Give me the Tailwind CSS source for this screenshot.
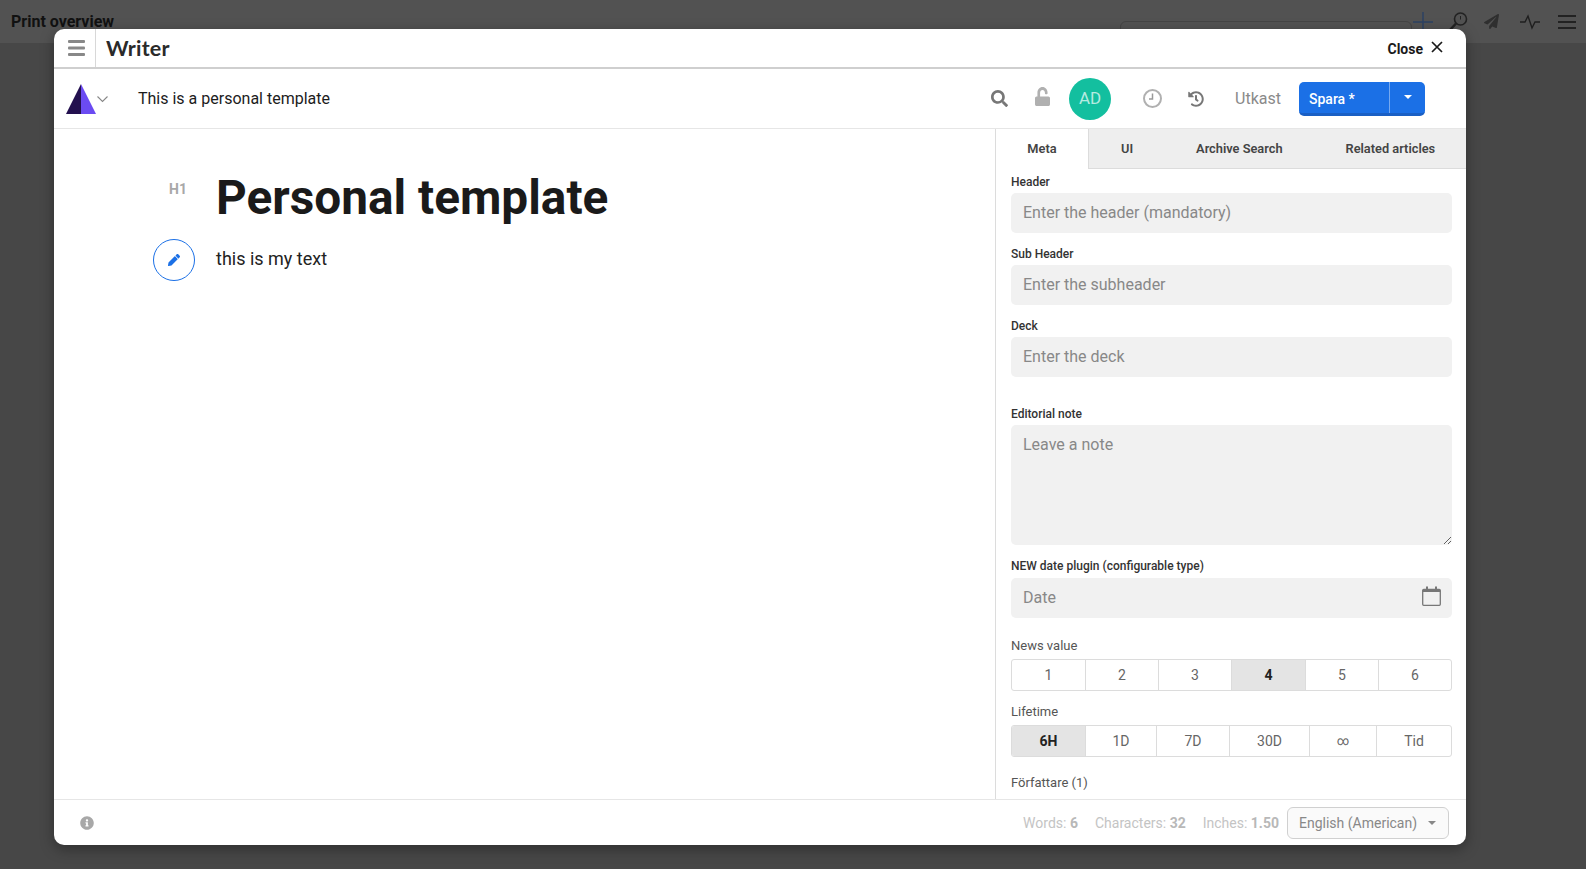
<!DOCTYPE html>
<html>
<head>
    <title>Writer</title>
    <meta charset="utf-8">
    <script src="https://cdn.jsdelivr.net/npm/@tailwindcss/browser@4"></script>
</head>
<body class="bg-[#474747] font-[Roboto,sans-serif] overflow-hidden">
    <div class="relative h-[869px] w-[1586px]">
        <!-- Page behind the modal -->
        <div class="flex h-[43px] items-center justify-between bg-[#525252] pl-[11px] pr-[10px]">
            <h1 class="text-[16px] font-bold text-[#111] -mb-[1px]">Print overview</h1>
            <div class="flex items-center">
                <div class="h-[30px] w-[292px] rounded-t-md border border-[#444] mt-[28px]"></div>
                <svg class="ml-[1px] h-[20px] w-[20px] text-[#2c4163]" viewBox="0 0 20 20" fill="none" stroke="currentColor" stroke-width="1.5"><path d="M10 0v20M0 10h20"/></svg>
                <svg class="ml-[15px] h-[20px] w-[20px] text-[#222]" viewBox="0 0 20 20" fill="none" stroke="currentColor" stroke-width="1.6"><circle cx="12.5" cy="7" r="6"/><path d="M8 11.5 1.5 18.5" stroke-width="2.5"/><path d="M12.5 4v3.5" stroke-width="1"/></svg>
                <svg class="ml-[16px] h-[15px] w-[15px] text-[#2f2f2f]" viewBox="0 0 512 512" fill="currentColor"><path d="M476 3.2L12.5 270.6c-18.1 10.4-15.8 35.6 2.2 43.2L121 358.4l287.3-253.2c5.5-4.9 13.3 2.6 8.6 8.3L176 407v80.5c0 23.6 28.5 32.9 42.5 15.8L282 426l124.6 52.2c14.2 6 30.4-2.9 33-18.2l72-432C515 7.8 493.3-6.8 476 3.2z"/></svg>
                <svg class="ml-[21px] h-[20px] w-[20px] text-[#1f1f1f]" viewBox="0 0 20 20" fill="none" stroke="currentColor" stroke-width="1.4"><path d="M0 10h5l3-6 4 12 3-6h5"/></svg>
                <svg class="ml-[18px] h-[18px] w-[18px] text-[#222]" viewBox="0 0 18 18" fill="none" stroke="currentColor" stroke-width="1.8"><path d="M0 3h18M0 9h18M0 15h18"/></svg>
            </div>
        </div>

        <!-- Modal -->
        <div class="absolute left-[54px] top-[29px] flex h-[816px] w-[1412px] flex-col overflow-hidden rounded-[10px] bg-white shadow-[0_4px_14px_rgba(0,0,0,0.35)]">
            <!-- Title bar -->
            <div class="flex h-[40px] shrink-0 items-center border-b-2 border-[#cfcfcf]">
                <div class="flex h-full w-[42px] items-center justify-end border-r border-[#d8d8d8] pr-[10px]">
                    <svg class="h-[16px] w-[17px] text-[#888]" viewBox="0 0 17 16" fill="currentColor"><rect width="17" height="3" rx="1"/><rect y="6.5" width="17" height="3" rx="1"/><rect y="13" width="17" height="3" rx="1"/></svg>
                </div>
                <div class="ml-[10px] mt-[2px] font-[Lato,sans-serif] text-[21.5px] font-bold leading-none tracking-[0.2px] text-[#2a2a2a]">Writer</div>
                <div class="ml-auto flex items-center pr-[23px]">
                    <span class="mt-[3px] text-[14px] font-bold text-[#1a1a1a]">Close</span>
                    <svg class="ml-[8px] -mt-[2px] h-[12px] w-[12px] text-[#1a1a1a]" viewBox="0 0 12 12" fill="none" stroke="currentColor" stroke-width="1.7"><path d="M1 1l10 10M11 1 1 11"/></svg>
                </div>
            </div>

            <!-- Toolbar -->
            <div class="flex h-[60px] shrink-0 items-center border-b border-[#e6e6e6] pl-[12px]">
                <svg class="h-[30px] w-[30px]" viewBox="0 0 30 30"><path d="M15 0 0 30h15z" fill="#23104f"/><path d="M15 0l15 30H15z" fill="#6b4bf2"/></svg>
                <svg class="ml-[1px] h-[8px] w-[11px] text-[#888]" viewBox="0 0 11 8" fill="none" stroke="currentColor" stroke-width="1.1"><path d="M.5 1.5l5 5 5-5"/></svg>
                <div class="ml-[30px] text-[16px] text-[#1c1c1c]">This is a personal template</div>

                <div class="ml-auto flex items-center pr-[41px]">
                    <svg class="h-[17px] w-[17px] text-[#777]" viewBox="0 0 512 512" fill="currentColor"><path d="M505 442.7L405.3 343c-4.5-4.5-10.6-7-17-7H372c27.6-35.3 44-79.7 44-128C416 93.1 322.9 0 208 0S0 93.1 0 208s93.1 208 208 208c48.3 0 92.7-16.4 128-44v16.3c0 6.4 2.5 12.5 7 17l99.7 99.7c9.4 9.4 24.6 9.4 33.9 0l28.3-28.3c9.4-9.4 9.4-24.6.1-34zM208 336c-70.7 0-128-57.2-128-128 0-70.7 57.2-128 128-128 70.7 0 128 57.2 128 128 0 70.7-57.2 128-128 128z"/></svg>
                    <svg class="ml-[27px] -mt-[4px] h-[19px] w-[15px] text-[#b0b0b0]" viewBox="0 0 448 512" preserveAspectRatio="none" fill="currentColor"><path d="M400 256H152V152.9c0-39.6 31.7-72.5 71.3-72.9 40-.4 72.7 32.1 72.7 72v16c0 13.3 10.7 24 24 24h32c13.3 0 24-10.7 24-24v-16C376 68 307.5-.3 223.5 0 139.5.3 72 69.5 72 153.5V256H48c-26.5 0-48 21.5-48 48v160c0 26.5 21.5 48 48 48h352c26.5 0 48-21.5 48-48V304c0-26.5-21.5-48-48-48z"/></svg>
                    <div class="ml-[19px] flex h-[42px] w-[42px] items-center justify-center rounded-full bg-[#13bf9f] text-[17px] text-white/70">AD</div>
                    <svg class="ml-[32px] h-[19px] w-[19px] text-[#b0b0b0]" viewBox="0 0 19 19" fill="none" stroke="currentColor"><circle cx="9.5" cy="9.5" r="8.5" stroke-width="2"/><path d="M9.5 4.5v5.5H6" stroke-width="1.5" stroke="#999"/></svg>
                    <svg class="ml-[26px] h-[16px] w-[16px] text-[#777]" viewBox="0 0 512 512" fill="currentColor"><path d="M504 255.531c.253 136.64-111.18 248.372-247.82 248.468-59.015.042-113.223-20.53-155.822-54.911-11.077-8.94-11.905-25.541-1.839-35.607l11.267-11.267c8.609-8.609 22.353-9.551 31.891-1.984C173.062 425.135 212.781 440 256 440c101.705 0 184-82.311 184-184 0-101.705-82.311-184-184-184-48.814 0-93.149 18.969-126.068 49.932l50.754 50.754c10.08 10.08 2.941 27.314-11.313 27.314H24c-8.837 0-16-7.163-16-16V38.627c0-14.254 17.234-21.393 27.314-11.314l49.372 49.372C129.209 34.136 189.552 8 256 8c136.81 0 247.747 110.78 248 247.531zm-180.912 78.784l9.823-12.63c8.138-10.463 6.253-25.542-4.21-33.679L288 256.349V152c0-13.255-10.745-24-24-24h-16c-13.255 0-24 10.745-24 24v135.651l65.409 50.874c10.463 8.137 25.541 6.253 33.679-4.21z"/></svg>
                    <span class="ml-[31px] text-[16px] text-[#8a8a8a]">Utkast</span>
                    <div class="ml-[18px] flex h-[34px] w-[126px] overflow-hidden rounded-[5px] border-b-[3px] border-[#1a5fc4] bg-[#1b70e6] text-white">
                        <span class="flex w-[90px] items-center pl-[10px] pt-[4px] text-[14px] font-medium">Spara *</span>
                        <span class="flex flex-1 items-center justify-center border-l border-white/40">
                            <span class="h-0 w-0 border-x-[4px] border-t-[4px] border-x-transparent border-t-white"></span>
                        </span>
                    </div>
                </div>
            </div>

            <!-- Body -->
            <div class="flex min-h-0 flex-1">
                <!-- Editor -->
                <div class="flex-1 pl-[99px]">
                    <div class="flex">
                        <div class="w-[63px] pt-[53px] pl-[16px] text-[14px] font-bold leading-[15px] text-[#a8a8a8]">H1</div>
                        <h2 class="pt-[36px] text-[47.75px] font-bold leading-[66px] text-[#1a1a1a]">Personal template</h2>
                    </div>
                    <div class="mt-[8px] flex items-center">
                        <div class="flex h-[42px] w-[42px] items-center justify-center rounded-full border border-[#1b70e6]">
                            <svg class="-mt-[1px] h-[12px] w-[12px] text-[#1b70e6]" viewBox="0 0 512 512" fill="currentColor"><path d="M497.9 142.1l-46.1 46.1c-4.7 4.7-12.3 4.7-17 0l-111-111c-4.7-4.7-4.7-12.3 0-17l46.1-46.1c18.7-18.7 49.1-18.7 67.9 0l60.1 60.1c18.8 18.7 18.8 49.1 0 67.9zM284.2 99.8L21.6 362.4.4 483.9c-2.9 16.4 11.4 30.6 27.8 27.8l121.5-21.3 262.6-262.6c4.7-4.7 4.7-12.3 0-17l-111-111c-4.8-4.7-12.4-4.7-17.1 0z"/></svg>
                        </div>
                        <p class="ml-[21px] -mt-[4px] text-[18px] text-[#222]">this is my text</p>
                    </div>
                </div>

                <!-- Side panel -->
                <div class="w-[471px] shrink-0 overflow-hidden border-l border-[#dcdcdc]">
                    <div class="flex h-[40px] items-center border-b border-[#dcdcdc] bg-[#eeeeee] text-[12.8px] font-semibold text-[#444]">
                        <span class="-mb-px flex h-[40px] w-[93px] items-center justify-center border-r border-[#dcdcdc] bg-white">Meta</span>
                        <span class="ml-[32px]">UI</span>
                        <span class="ml-[63px]">Archive Search</span>
                        <span class="ml-[63px]">Related articles</span>
                    </div>
                    <div class="pl-[15px] pr-[14px]">
                        <label class="mt-[5px] block text-[12px] font-medium leading-[16px] text-[#333]">Header</label>
                        <input class="mt-[3px] block h-[40px] w-full rounded-[5px] bg-[#f1f1f1] px-[12px] pb-[2px] text-[16px] placeholder:text-[#888]" placeholder="Enter the header (mandatory)">
                        <label class="mt-[13px] block text-[12px] font-medium leading-[16px] text-[#333]">Sub Header</label>
                        <input class="mt-[3px] block h-[40px] w-full rounded-[5px] bg-[#f1f1f1] px-[12px] pb-[2px] text-[16px] placeholder:text-[#888]" placeholder="Enter the subheader">
                        <label class="mt-[13px] block text-[12px] font-medium leading-[16px] text-[#333]">Deck</label>
                        <input class="mt-[3px] block h-[40px] w-full rounded-[5px] bg-[#f1f1f1] px-[12px] pb-[2px] text-[16px] placeholder:text-[#888]" placeholder="Enter the deck">
                        <label class="mt-[29px] block text-[12px] font-medium leading-[16px] text-[#333]">Editorial note</label>
                        <textarea class="mt-[3px] block h-[120px] w-full rounded-[5px] bg-[#f1f1f1] px-[12px] py-[8px] text-[16px] placeholder:text-[#888]" placeholder="Leave a note"></textarea>
                        <label class="mt-[13px] block text-[12px] font-medium leading-[16px] text-[#333]">NEW date plugin (configurable type)</label>
                        <div class="relative mt-[4px]">
                            <input class="block h-[40px] w-full rounded-[5px] bg-[#f1f1f1] px-[12px] pb-[2px] text-[16px] placeholder:text-[#888]" placeholder="Date">
                            <svg class="absolute right-[11px] top-[8px] h-[20px] w-[19px] text-[#777]" viewBox="0 0 19 20" fill="none" stroke="currentColor" stroke-width="1.3"><rect x=".7" y="3.5" width="17.6" height="15.8" rx="1"/><path d="M.7 5h17.6" stroke-width="2"/><path d="M5 .5v4M14 .5v4" stroke-width="2"/></svg>
                        </div>
                        <div class="mt-[20px] text-[13px] leading-[16px] text-[#555]">News value</div>
                        <div class="mt-[5px] flex h-[32px] overflow-hidden rounded-[3px] border border-[#dcdcdc] text-[14px] text-[#666]">
                            <span class="flex w-[74px] items-center justify-center border-r border-[#dcdcdc]">1</span>
                            <span class="flex w-[73px] items-center justify-center border-r border-[#dcdcdc]">2</span>
                            <span class="flex w-[73px] items-center justify-center border-r border-[#dcdcdc]">3</span>
                            <span class="flex w-[74px] items-center justify-center border-r border-[#dcdcdc] bg-[#e4e4e4] font-bold text-[#222]">4</span>
                            <span class="flex w-[73px] items-center justify-center border-r border-[#dcdcdc]">5</span>
                            <span class="flex flex-1 items-center justify-center">6</span>
                        </div>
                        <div class="mt-[13px] text-[13px] leading-[16px] text-[#555]">Lifetime</div>
                        <div class="mt-[5px] flex h-[32px] overflow-hidden rounded-[3px] border border-[#dcdcdc] text-[14px] text-[#666]">
                            <span class="flex w-[74px] items-center justify-center border-r border-[#dcdcdc] bg-[#e4e4e4] font-bold text-[#222]">6H</span>
                            <span class="flex w-[71px] items-center justify-center border-r border-[#dcdcdc]">1D</span>
                            <span class="flex w-[73px] items-center justify-center border-r border-[#dcdcdc]">7D</span>
                            <span class="flex w-[80px] items-center justify-center border-r border-[#dcdcdc]">30D</span>
                            <span class="flex w-[67px] items-center justify-center border-r border-[#dcdcdc] text-[12px]">∞</span>
                            <span class="flex flex-1 items-center justify-center">Tid</span>
                        </div>
                        <div class="mt-[18px] text-[13px] leading-[16px] text-[#555]">Författare (1)</div>
                    </div>
                </div>
            </div>

            <!-- Footer -->
            <div class="flex h-[46px] shrink-0 items-center border-t border-[#e6e6e6] pl-[26px] pr-[17px]">
                <svg class="h-[14px] w-[14px] text-[#a8a8a8]" viewBox="0 0 512 512" fill="currentColor"><path d="M256 8C119.043 8 8 119.083 8 256c0 136.997 111.043 248 248 248s248-111.003 248-248C504 119.083 392.957 8 256 8zm0 110c23.196 0 42 18.804 42 42s-18.804 42-42 42-42-18.804-42-42 18.804-42 42-42zm56 254c0 6.627-5.373 12-12 12h-88c-6.627 0-12-5.373-12-12v-24c0-6.627 5.373-12 12-12h12v-64h-12c-6.627 0-12-5.373-12-12v-24c0-6.627 5.373-12 12-12h64c6.627 0 12 5.373 12 12v100h12c6.627 0 12 5.373 12 12v24z"/></svg>
                <div class="ml-auto flex items-center text-[14px] text-[#c4c4c4]">
                    <span class="mt-[2px]">Words: <b class="font-bold text-[#b8b8b8]">6</b></span>
                    <span class="ml-[17px] mt-[2px]">Characters: <b class="font-bold text-[#b8b8b8]">32</b></span>
                    <span class="ml-[17px] mt-[2px]">Inches: <b class="font-bold text-[#b8b8b8]">1.50</b></span>
                    <div class="ml-[8px] flex h-[32px] w-[162px] items-center justify-between rounded-[6px] border border-[#d0d0d0] bg-[#fafafa] pl-[11px] pr-[12px] text-[#888]">
                        <span class="mt-[1px]">English (American)</span>
                        <span class="h-0 w-0 border-x-[4px] border-t-[4px] border-x-transparent border-t-[#888]"></span>
                    </div>
                </div>
            </div>
        </div>
    </div>
</body>
</html>
